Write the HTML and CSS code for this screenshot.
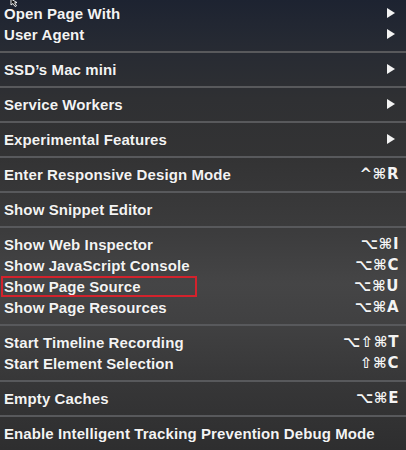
FILE: index.html
```html
<!DOCTYPE html>
<html>
<head>
<meta charset="utf-8">
<link rel="stylesheet" href="styles.css">
</head>
<body>
<div class="menu">
  <svg class="cursor" width="10" height="8" viewBox="0 0 10 8"><path d="M2 0 L2 6 L4 4.5 L6 7.5 L7.5 6.8 L5.6 3.8 L8 3.6 Z" fill="#111" stroke="#fff" stroke-width="0.9"/></svg>
  <div class="item"><span class="label">Open Page With</span><span class="arrow"></span></div>
  <div class="item"><span class="label">User Agent</span><span class="arrow"></span></div>
  <div class="sep"></div>
  <div class="item"><span class="label">SSD’s Mac mini</span><span class="arrow"></span></div>
  <div class="sep"></div>
  <div class="item"><span class="label">Service Workers</span><span class="arrow"></span></div>
  <div class="sep"></div>
  <div class="item"><span class="label">Experimental Features</span><span class="arrow"></span></div>
  <div class="sep"></div>
  <div class="item"><span class="label">Enter Responsive Design Mode</span><span class="key">^⌘R</span></div>
  <div class="sep"></div>
  <div class="item"><span class="label">Show Snippet Editor</span></div>
  <div class="sep"></div>
  <div class="item"><span class="label">Show Web Inspector</span><span class="key">⌥⌘I</span></div>
  <div class="item"><span class="label">Show JavaScript Console</span><span class="key">⌥⌘C</span></div>
  <div class="item highlighted"><span class="label">Show Page Source</span><span class="key">⌥⌘U</span><span class="mark"></span></div>
  <div class="item"><span class="label">Show Page Resources</span><span class="key">⌥⌘A</span></div>
  <div class="sep"></div>
  <div class="item"><span class="label">Start Timeline Recording</span><span class="key">⌥⇧⌘T</span></div>
  <div class="item"><span class="label">Start Element Selection</span><span class="key">⇧⌘C</span></div>
  <div class="sep"></div>
  <div class="item"><span class="label">Empty Caches</span><span class="key">⌥⌘E</span></div>
  <div class="sep"></div>
  <div class="item"><span class="label">Enable Intelligent Tracking Prevention Debug Mode</span></div>
</div>
</body>
</html>
```
FILE: styles.css
```css
html, body {
  margin: 0;
  padding: 0;
  background: #2e2e2f;
}
.menu {
  position: relative;
  width: 406px;
  height: 450px;
  box-sizing: border-box;
  padding-top: 2.5px;
  background: linear-gradient(to bottom, #1d2331 0%, #262a33 10%, #2f3033 22%, #333334 35%, #3b3b3c 50%, #454546 63%, #404041 73%, #363637 86%, #2e2e2f 100%);
  font-family: "Liberation Sans", Arial, sans-serif;
  font-weight: bold;
  font-size: 15px;
  letter-spacing: 0.1px;
  color: #f3f3f3;
  overflow: hidden;
}
.cursor {
  position: absolute;
  left: 9px;
  top: -1px;
}
.item {
  position: relative;
  height: 21px;
  display: flex;
  align-items: center;
  justify-content: space-between;
  padding: 0 7px 0 4px;
  text-shadow: 0 0 1px rgba(0,0,0,0.4);
}
.label {
  white-space: nowrap;
}
.arrow {
  width: 0;
  height: 0;
  border-top: 5.5px solid transparent;
  border-bottom: 5.5px solid transparent;
  border-left: 8px solid #f3f3f3;
  margin-right: 4px;
}
.key {
  font-family: "DejaVu Sans", sans-serif;
  font-weight: bold;
  font-size: 15px;
  letter-spacing: 0.5px;
}
.sep {
  height: 14px;
  display: flex;
  align-items: center;
}
.sep::before {
  content: "";
  display: block;
  width: 100%;
  height: 2px;
  background: #58595c;
}
.mark {
  position: absolute;
  left: 1px;
  top: 0;
  width: 196px;
  height: 21px;
  box-sizing: border-box;
  border: 2px solid #d3222c;
}
```
